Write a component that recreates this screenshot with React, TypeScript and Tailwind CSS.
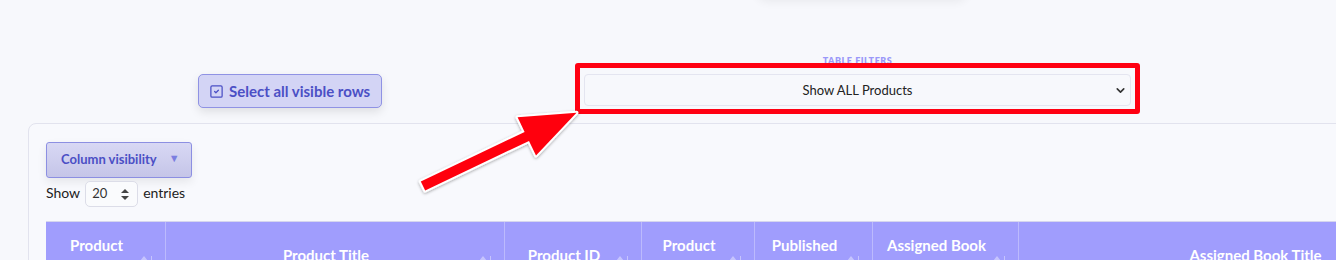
import { SquareCheck, ChevronDown } from "lucide-react";

const FONT = "font-['Lato','Noto_Sans',sans-serif]";

const COLUMNS = [
  { label: ["Product", "Type"], w: "w-[119px]" },
  { label: ["Product Title"], w: "w-[339px]" },
  { label: ["Product ID"], w: "w-[137px]" },
  { label: ["Product", "Status"], w: "w-[113px]" },
  { label: ["Published", "Date"], w: "w-[118px]" },
  { label: ["Assigned Book", "ID"], w: "w-[146px]" },
  { label: ["Assigned Book Title"], w: "w-[492px]" },
];

function SortIcons() {
  return (
    <div className="absolute right-[13px] top-[34px] flex items-start gap-[3px] opacity-40">
      <svg width="8" height="12" viewBox="0 0 8 12">
        <path d="M4 0 L8 5 L0 5 Z" fill="#fff" />
        <path d="M4 12 L8 7 L0 7 Z" fill="#fff" />
      </svg>
      <div className="w-px h-[12px] bg-white" />
    </div>
  );
}

function Arrow() {
  // red annotation arrow pointing at the filter select
  return (
    <svg
      className="absolute left-0 top-0 pointer-events-none"
      width="1336"
      height="260"
      viewBox="0 0 1336 260"
    >
      <defs>
        <filter id="sh" x="-20%" y="-20%" width="140%" height="140%">
          <feDropShadow dx="0" dy="1" stdDeviation="1.5" floodColor="#000" floodOpacity="0.35" />
        </filter>
      </defs>
      <polygon
        points="420.8,181.5 524.6,131.9 517.6,117.3 576.5,112.7 536,155.5 529,140.9 425.2,190.5"
        fill="#ff0010"
        stroke="#fff"
        strokeWidth="4"
        strokeLinejoin="round"
        paintOrder="stroke"
        filter="url(#sh)"
      />
    </svg>
  );
}

export default function App() {
  return (
    <div className={`relative w-[1336px] h-[260px] overflow-hidden bg-[#f7f8fc] ${FONT}`}>
      {/* cut-off element above */}
      <div className="absolute left-[756px] -top-[40px] w-[212px] h-[40px] rounded-xl bg-[#f7f8fc] shadow-[0_2px_10px_rgba(0,0,0,0.06)]" />

      {/* Top bar */}
      <div className="h-[123px] flex items-start pt-[55px]">
        <button className="mt-[19px] ml-[198px] h-[34px] w-[184px] shrink-0 px-[10px] flex items-center gap-[5px] rounded-[5px] border border-[#8f92e4] bg-[#d3d4f5] text-[#4b4fc5] text-[15px] font-bold shadow-[0_4px_10px_rgba(0,0,0,0.1)] whitespace-nowrap">
          <SquareCheck size={15} strokeWidth={2} />
          Select all visible rows
        </button>

        <div className="ml-[202px] w-[547px] flex flex-col items-center">
          <div className="h-[12px] leading-[12px] text-[9px] font-extrabold tracking-[0.06em] text-[#9b99f9]">TABLE FILTERS</div>
          <div className="relative mt-[7px] w-full">
            <div className="h-[32px] w-full rounded-[4px] border border-[#e4e5f0] bg-[#f7f8fc] flex items-center justify-center pt-[2px] text-[13px] text-[#222]">
              Show ALL Products
              <ChevronDown size={13} strokeWidth={3} className="absolute right-[4px] top-[10px] text-[#333]" />
            </div>
            {/* highlight box */}
            <div className="absolute -left-[9px] -right-[9px] -top-[11px] -bottom-[8px] border-[5px] border-[#ff0012] rounded-[3px]" />
          </div>
        </div>
      </div>

      {/* Card */}
      <div className="ml-[28px] w-[1520px] h-[200px] rounded-lg border border-[#e2e3ee] bg-[#f8f9fd] pt-[18px] pl-[17px]">
        <button className="h-[36px] w-[146px] flex items-center justify-start pl-[14px] gap-[12px] rounded-[3px] border border-[#8c8fe2] bg-gradient-to-b from-[#d8d8f4] to-[#c5c5e8] text-[#4b4fc5] text-[13px] font-bold shadow-[0_4px_10px_rgba(0,0,0,0.08)]">
          Column visibility
          <span className="text-[11px] text-[#7b7fe0] -mt-[4px]">▼</span>
        </button>

        <div className="mt-[3px] flex items-center gap-[5px] text-[14px] text-[#222]">
          <span className="-mt-[3px]">Show</span>
          <div className="h-[26px] w-[53px] rounded-[5px] border border-[#dcdde8] bg-[#fafbfd] flex items-center justify-between pl-[6px] pr-[8px] text-[13px] text-[#333]">
            20
            <svg width="8" height="11" viewBox="0 0 8 11">
              <path d="M4 0 L8 4 L0 4 Z" fill="#444" />
              <path d="M4 11 L8 7 L0 7 Z" fill="#444" />
            </svg>
          </div>
          <span className="-mt-[3px]">entries</span>
        </div>

        {/* Table header */}
        <div className="mt-[14px] flex border-t border-[#d6d6ee] bg-[#a09dfd]">
          {COLUMNS.map((c, i) => (
            <div
              key={i}
              className={`relative ${c.w} h-[66px] shrink-0 flex flex-col items-center justify-center pr-[18px] text-white text-[15px] font-bold leading-[20px] whitespace-nowrap ${
                i > 0 ? "border-l border-[#bcbafd]" : ""
              }`}
            >
              {c.label.map((l) => (
                <span key={l}>{l}</span>
              ))}
              <SortIcons />
            </div>
          ))}
        </div>
      </div>

      <Arrow />
    </div>
  );
}
